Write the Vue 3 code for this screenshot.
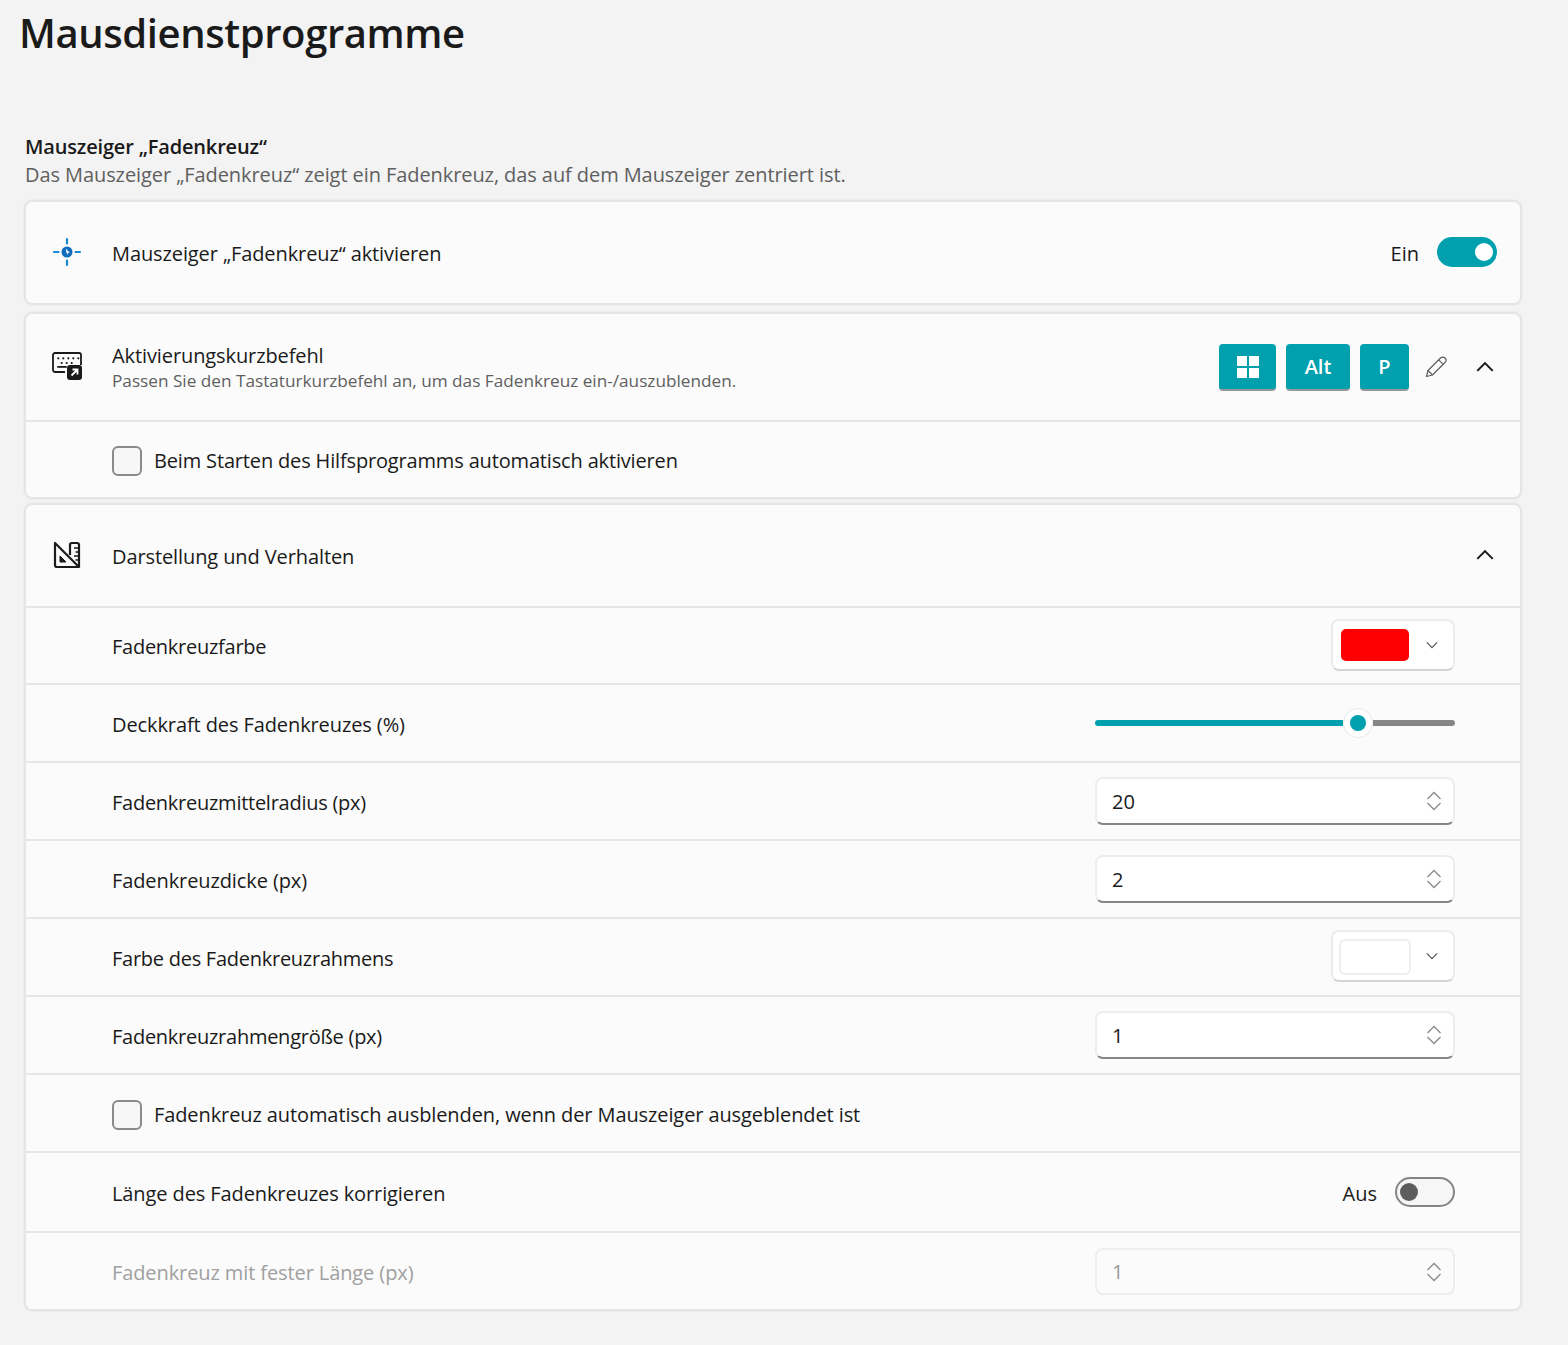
<script setup>
const chev = 'M1 7 L7 1 L13 7'
</script>

<template>
  <div class="page">
    <h1 class="title">Mausdienstprogramme</h1>
    <div class="section-head">
      <div class="section-title">Mauszeiger „Fadenkreuz“</div>
      <div class="section-desc">Das Mauszeiger „Fadenkreuz“ zeigt ein Fadenkreuz, das auf dem Mauszeiger zentriert ist.</div>
    </div>

    <div class="card c1">
      <div class="row head h-enable">
        <span class="ico">
          <svg width="30" height="30" viewBox="0 0 30 30">
            <g stroke="#1a8ad4" stroke-width="2.200" stroke-linecap="round">
              <path d="M15 2V6.500M15 23.500V28M2 15H6.500M23.500 15H28" />
            </g>
            <circle cx="15" cy="15" r="5.500" fill="#0f6cbd" />
            <path d="M13.600 11.600L17.800 15.800L15.600 15.900L15.200 18.400Z" fill="#fff" />
          </svg>
        </span>
        <span class="label">Mauszeiger „Fadenkreuz“ aktivieren</span>
        <span class="state on-state">Ein</span>
        <span class="toggle on"><i></i></span>
      </div>
    </div>

    <div class="card c2">
      <div class="row head h-short">
        <span class="ico">
          <svg width="30" height="28" viewBox="0 0 30 28" fill="none">
            <path d="M13 20H3a2 2 0 0 1-2-2V3a2 2 0 0 1 2-2h24a2 2 0 0 1 2 2v10" stroke="#1a1a1a" stroke-width="1.800" />
            <g fill="#1a1a1a">
              <circle cx="6.300" cy="6.300" r="1.100" /><circle cx="11.300" cy="6.300" r="1.100" /><circle cx="16.300" cy="6.300" r="1.100" /><circle cx="21.300" cy="6.300" r="1.100" /><circle cx="26.300" cy="6.300" r="1.100" />
              <circle cx="9.700" cy="11" r="1.100" /><circle cx="14.700" cy="11" r="1.100" /><circle cx="19.700" cy="11" r="1.100" />
              <rect x="5.300" y="14" width="9.400" height="1.800" />
              <rect x="15" y="13" width="15" height="15" rx="3" />
            </g>
            <path d="M19.500 23.500L25.500 17.500M20.500 17.500H25.500V22.500" stroke="#fff" stroke-width="1.800" />
          </svg>
        </span>
        <div class="two-line">
          <span class="label">Aktivierungskurzbefehl</span>
          <span class="sub">Passen Sie den Tastaturkurzbefehl an, um das Fadenkreuz ein-/auszublenden.</span>
        </div>
        <div class="keys">
          <span class="key k-win">
            <svg width="22" height="22" viewBox="0 0 22 22" fill="#fff">
              <rect x="0" y="0" width="10" height="10" /><rect x="12" y="0" width="10" height="10" />
              <rect x="0" y="12" width="10" height="10" /><rect x="12" y="12" width="10" height="10" />
            </svg>
          </span>
          <span class="key k-alt">Alt</span>
          <span class="key k-p">P</span>
        </div>
        <svg class="pen" width="22" height="22" viewBox="0 0 22 22" fill="none" stroke="#5e5e5e" stroke-width="1.200" stroke-linejoin="round">
          <path d="M1.500 20.500L3 14.500L15.500 2A2.500 2.500 0 0 1 20 6.500L7.500 19Z" />
          <path d="M13.700 3.800L18.200 8.300M3 14.500L7.500 19" />
        </svg>
        <svg class="chev" width="18" height="12" viewBox="0 0 14 8" fill="none" stroke="#1a1a1a" stroke-width="1.600"><path :d="chev" /></svg>
      </div>
      <div class="row r-check r-78 first-check">
        <span class="check"></span>
        <span class="label tight-s">Beim Starten des Hilfsprogramms automatisch aktivieren</span>
      </div>
    </div>

    <div class="card c3">
      <div class="row head h-app">
        <span class="ico">
          <svg width="28" height="28" viewBox="0 0 28 28" fill="none" stroke="#1a1a1a" stroke-width="2.200" stroke-linejoin="round">
            <path d="M2 2V24a2 2 0 0 0 2 2H26Z" />
            <path d="M7 21V15L13 21Z" fill="#1a1a1a" stroke-width="1" />
            <path d="M17 14V4a2 2 0 0 1 2-2h5a2 2 0 0 1 2 2V26" />
            <path d="M21 7h5M22.500 11h3.500M21 15h5M22.500 19h3.500" stroke-width="1.600" />
          </svg>
        </span>
        <span class="label lower">Darstellung und Verhalten</span>
        <svg class="chev end" width="18" height="12" viewBox="0 0 14 8" fill="none" stroke="#1a1a1a" stroke-width="1.600"><path :d="chev" /></svg>
      </div>

      <div class="row r-indent r-77">
        <span class="label tight">Fadenkreuzfarbe</span>
        <span class="picker"><span class="swatch red"></span><svg width="12" height="8" viewBox="0 0 14 8" fill="none" stroke="#555" stroke-width="1.400"><path d="M1 1L7 7L13 1" /></svg></span>
      </div>
      <div class="row r-indent r-78">
        <span class="label">Deckkraft des Fadenkreuzes (%)</span>
        <span class="slider"><span class="fill"></span><span class="thumb"><i></i></span><span class="rest"></span></span>
      </div>
      <div class="row r-indent r-78">
        <span class="label tight">Fadenkreuzmittelradius (px)</span>
        <span class="num"><span>20</span><svg width="16" height="20" viewBox="0 0 16 20" fill="none" stroke="#8a8a8a" stroke-width="1.300"><path d="M1.500 8L8 1.500L14.500 8M1.500 12L8 18.500L14.500 12" /></svg></span>
      </div>
      <div class="row r-indent r-78">
        <span class="label">Fadenkreuzdicke (px)</span>
        <span class="num"><span>2</span><svg width="16" height="20" viewBox="0 0 16 20" fill="none" stroke="#8a8a8a" stroke-width="1.300"><path d="M1.500 8L8 1.500L14.500 8M1.500 12L8 18.500L14.500 12" /></svg></span>
      </div>
      <div class="row r-indent r-78">
        <span class="label tight">Farbe des Fadenkreuzrahmens</span>
        <span class="picker"><span class="swatch white"></span><svg width="12" height="8" viewBox="0 0 14 8" fill="none" stroke="#555" stroke-width="1.400"><path d="M1 1L7 7L13 1" /></svg></span>
      </div>
      <div class="row r-indent r-78">
        <span class="label tight">Fadenkreuzrahmengröße (px)</span>
        <span class="num"><span>1</span><svg width="16" height="20" viewBox="0 0 16 20" fill="none" stroke="#8a8a8a" stroke-width="1.300"><path d="M1.500 8L8 1.500L14.500 8M1.500 12L8 18.500L14.500 12" /></svg></span>
      </div>
      <div class="row r-check r-78">
        <span class="check low"></span>
        <span class="label">Fadenkreuz automatisch ausblenden, wenn der Mauszeiger ausgeblendet ist</span>
      </div>
      <div class="row r-indent r-80">
        <span class="label">Länge des Fadenkreuzes korrigieren</span>
        <span class="state">Aus</span>
        <span class="toggle off"><i></i></span>
      </div>
      <div class="row r-indent r-79 disabled">
        <span class="label">Fadenkreuz mit fester Länge (px)</span>
        <span class="num dis"><span>1</span><svg width="16" height="20" viewBox="0 0 16 20" fill="none" stroke="#8a8a8a" stroke-width="1.300"><path d="M1.500 8L8 1.500L14.500 8M1.500 12L8 18.500L14.500 12" /></svg></span>
      </div>
    </div>
  </div>
</template>

<style>
html, body { margin: 0; background: #f3f3f3; }
</style>

<style scoped>
.page {
  box-sizing: border-box;
  width: 1568px;
  height: 1345px;
  overflow: hidden;
  padding: 0 46px 0 24px;
  background: #f3f3f3;
  font-family: "Open Sans", "Noto Sans", sans-serif;
  color: #1a1a1a;
}
.title {
  margin: 0 0 0 -5px;
  font-size: 40px;
  line-height: 66px;
  font-weight: 600;
  letter-spacing: -0.4px;
  height: 134px;
  color: #1a1a1a;
}
.section-head { padding-left: 1px; height: 66px; }
.section-title { font-size: 20px; line-height: 26px; font-weight: 600; letter-spacing: -0.17px; }
.section-desc { font-size: 20px; line-height: 30px; color: #5f5f5f; letter-spacing: -0.08px; }
.card {
  box-sizing: border-box;
  background: #fbfbfb;
  border: 2px solid #e5e5e5;
  border-radius: 8px;
  box-shadow: 0 0 0 1px #eeeeee;
}
.c1 { height: 105px; margin-bottom: 7px; }
.c2 { height: 187px; margin-bottom: 4px; }
.c3 { height: 808px; }
.row {
  box-sizing: border-box;
  display: flex;
  align-items: center;
  border-top: 2px solid #e6e6e6;
  padding-right: 65px;
}
.head { border-top: 0; padding-left: 26px; padding-right: 23px; }
.h-enable { height: 101px; }
.h-short { height: 106px; padding-right: 26px; }
.h-app { height: 101px; padding-right: 26px; padding-bottom: 2px; }
.r-77 { height: 77px; }
.r-78 { height: 78px; }
.r-79 { height: 79px; }
.r-80 { height: 80px; }
.r-indent { padding-left: 86px; }
.r-check { padding-left: 86px; }
.ico { width: 30px; height: 30px; display: flex; align-items: center; justify-content: center; margin-right: 30px; flex: none; position: relative; top: -1px; }
.h-app .ico { top: 0; }
.label { font-size: 20px; line-height: 27px; letter-spacing: -0.1px; margin-right: auto; }
.r-indent .label, .r-check .label, .h-enable .label { margin-top: 2px; }
.first-check .label { margin-top: 0; }
.label.lower { margin-top: 4px; }
.label.tight { letter-spacing: -0.26px; }
.label.tight-s { letter-spacing: -0.16px; }
.two-line { display: flex; flex-direction: column; margin-right: auto; }
.sub { font-size: 17.200px; line-height: 22px; color: #5f5f5f; margin-top: 1px; }
.state { font-size: 20px; margin-right: 18px; margin-top: 2px; }
.toggle { box-sizing: border-box; width: 60px; height: 30px; border-radius: 15px; position: relative; flex: none; }
.toggle.on { background: #00a0ae; top: -1px; }
.toggle.on i { position: absolute; right: 4px; top: 6px; width: 18px; height: 18px; border-radius: 50%; background: #fff; }
.toggle.off { background: #f6f6f6; border: 2px solid #858585; }
.toggle.off i { position: absolute; left: 3px; top: 4px; width: 18px; height: 18px; border-radius: 50%; background: #5d5d5d; }
.keys { display: flex; gap: 10px; align-items: center; }
.key {
  box-sizing: border-box;
  height: 47px;
  background: #00a0ae;
  border-radius: 4px;
  border-bottom: 2px solid #979797;
  color: #fff;
  font-weight: 600;
  font-size: 20px;
  padding-top: 1px;
  display: flex;
  align-items: center;
  justify-content: center;
}
.k-win { width: 57px; }
.k-alt { width: 64px; }
.k-p { width: 49px; }
.pen { margin-left: 16px; }
.chev { margin-left: 29px; }
.chev.end { margin-left: 0; }
.check { box-sizing: border-box; width: 30px; height: 30px; border-radius: 6px; border: 2px solid #8a8a8a; background: #f7f7f7; margin-right: 12px; flex: none; }
.check.low { margin-top: 4px; }
.first-check .check { margin-top: 2px; }
.picker {
  box-sizing: border-box;
  width: 124px;
  height: 52px;
  background: #fff;
  border: 2px solid #ececec;
  border-bottom-color: #d4d4d4;
  border-radius: 8px;
  padding: 0 15px 0 8px;
  display: flex;
  align-items: center;
  justify-content: space-between;
  position: relative;
  top: -1px;
}
.swatch { width: 68px; height: 32px; border-radius: 5px; }
.swatch.red { background: #ff0000; }
.swatch.white { box-sizing: border-box; width: 72px; height: 36px; background: #fff; border: 2px solid #eeeeee; border-radius: 6px; margin: 2px 0 0 -2px; }
.slider { width: 360px; display: flex; align-items: center; }
.fill { height: 6px; width: 248px; background: #00a0ae; border-radius: 3px 0 0 3px; }
.rest { height: 6px; flex: 1; background: #868686; border-radius: 0 3px 3px 0; }
.thumb { box-sizing: border-box; width: 30px; height: 30px; border-radius: 50%; background: #fff; border: 1px solid #e8e8e8; display: flex; align-items: center; justify-content: center; flex: none; }
.thumb i { width: 16px; height: 16px; border-radius: 50%; background: #00a0ae; }
.num {
  box-sizing: border-box;
  width: 360px;
  height: 48px;
  background: #fff;
  border: 2px solid #ededed;
  border-bottom: 2px solid #858585;
  border-radius: 8px;
  padding: 0 11px 0 15px;
  font-size: 20px;
  display: flex;
  align-items: center;
  justify-content: space-between;
}
.num.dis { height: 47px; background: #fbfbfb; border-bottom-color: #ededed; color: #9a9a9a; }
.disabled .label { color: #a0a0a0; }
</style>
